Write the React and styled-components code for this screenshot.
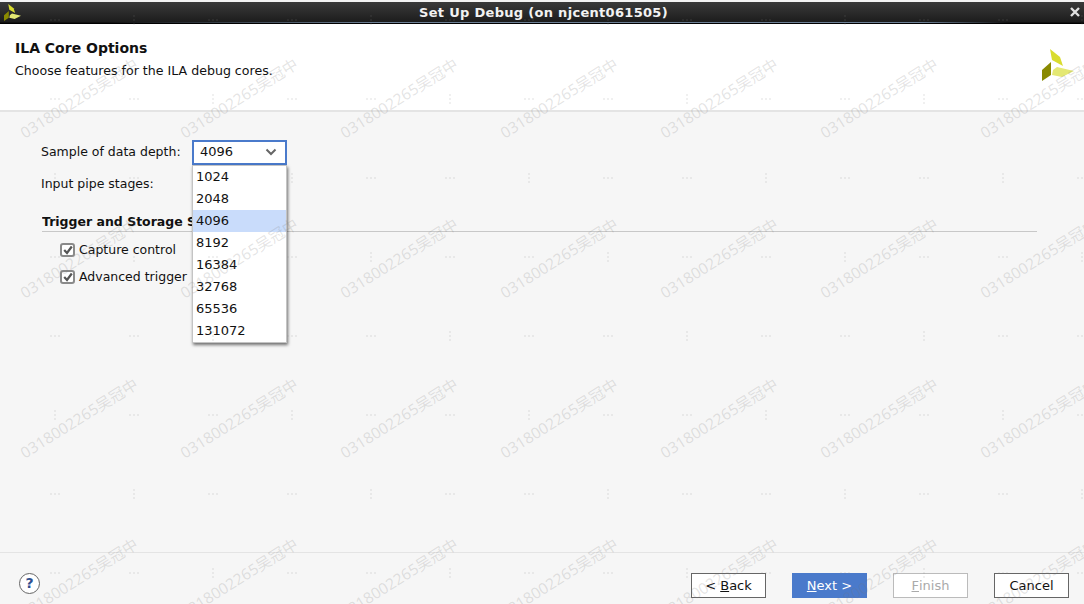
import React from "react";
import styled, { createGlobalStyle } from "styled-components";

const GlobalStyle = createGlobalStyle`
    html, body {
        margin: 0;
        padding: 0;
        background: #f6f6f6;
    }
    body {
        font-family: "DejaVu Sans", sans-serif;
        font-size: 13px;
        color: #111;
    }
`;

const Page = styled.div`
    position: relative;
    width: 1084px;
    height: 604px;
    overflow: hidden;
    display: flex;
    flex-direction: column;
    background: #f6f6f6;
`;

const TitleBar = styled.div`
    height: 24px;
    flex: none;
    display: flex;
    align-items: center;
    justify-content: space-between;
    padding: 0 4px;
    box-sizing: border-box;
    border-top: 2px solid #f4f4f4;
    border-bottom: 2px solid #000;
    background: linear-gradient(#3a3a3a, #1c1c1c);
`;

const TitleGlow = styled.div`
    height: 1px;
    flex: none;
    margin-top: -2px;
    background: linear-gradient(to right, #111 10%, #6c7f95 35%, #6c7f95 85%, #111 93%);
    position: relative;
`;

const TitleText = styled.div`
    flex: 1;
    text-align: center;
    color: #f2f2f2;
    font-weight: bold;
    font-size: 13px;
    letter-spacing: 0.3px;
    padding-right: 4px;
`;

const Header = styled.div`
    height: 88px;
    flex: none;
    margin-top: 1px;
    background: #fff;
    border-bottom: 2px solid #e4e4e4;
    box-sizing: border-box;
    display: flex;
    justify-content: space-between;
    padding: 15px 10px 0 15px;
`;

const HeaderTitle = styled.div`
    font-weight: bold;
    font-size: 14px;
    line-height: 18px;
`;

const HeaderSub = styled.div`
    font-size: 12.6px;
    line-height: 16px;
    margin-top: 6px;
`;

const HeaderLogo = styled.div`
    padding-top: 10px;
`;

const Body = styled.div`
    flex: 1;
    padding: 28px 47px 0 41px;
`;

const FieldRow = styled.div`
    display: flex;
    align-items: center;
    height: 25px;
    margin-bottom: 7px;
    font-size: 12.5px;
`;

const FieldLabel = styled.div`
    width: 151px;
    flex: none;
    padding-bottom: 2px;
`;

const SelectWrap = styled.div`
    position: relative;
    width: 95px;
    height: 25px;
`;

const SelectBox = styled.div`
    box-sizing: border-box;
    height: 25px;
    border: 2px solid #4a7acb;
    background: #fff;
    display: flex;
    align-items: center;
    justify-content: space-between;
    padding: 0 8px 2px 6px;
    font-size: 13px;
`;

const Dropdown = styled.div`
    position: absolute;
    top: 25px;
    left: 0;
    width: 95px;
    box-sizing: border-box;
    background: #fff;
    border: 1px solid #c4c4c4;
    box-shadow: 1px 2px 3px rgba(0, 0, 0, 0.55);
    z-index: 2;
`;

const Option = styled.div`
    height: 22px;
    line-height: 22px;
    padding-left: 3px;
    font-size: 13px;
    background: ${(p) => (p.$selected ? "#c9dcfb" : "transparent")};
`;

const SectionTitle = styled.div`
    margin: 17px 0 0 1px;
    font-weight: bold;
    font-size: 12.5px;
    line-height: 16px;
    height: 17px;
    white-space: nowrap;
    overflow: hidden;
    border-bottom: 1px solid #c8c8c8;
`;

const CheckRow = styled.div`
    display: flex;
    align-items: center;
    gap: 4px;
    height: 27px;
    margin-left: 19px;
    font-size: 12.5px;
`;

const CheckFirst = styled(CheckRow)`
    margin-top: 4px;
`;

const CheckBox = styled.div`
    width: 15px;
    height: 14px;
    box-sizing: border-box;
    border: 2px solid #8a8a8a;
    border-radius: 3px;
    background: #fff;
    display: flex;
    align-items: center;
    justify-content: center;
`;

const Footer = styled.div`
    height: 52px;
    flex: none;
    box-sizing: border-box;
    border-top: 1px solid #e4e4e4;
    display: flex;
    align-items: flex-start;
    padding: 20px 15px 0 19px;
`;

const HelpButton = styled.div`
    width: 21px;
    height: 21px;
    box-sizing: border-box;
    border: 1px solid #666;
    border-radius: 50%;
    background: #fff;
    color: #2f4f8f;
    font-weight: bold;
    font-size: 14px;
    line-height: 19px;
    text-align: center;
`;

const ButtonRow = styled.div`
    margin-left: auto;
    display: flex;
    gap: 26px;
`;

const Button = styled.div`
    width: 75px;
    height: 25px;
    box-sizing: border-box;
    display: flex;
    align-items: center;
    justify-content: center;
    font-size: 13px;
    white-space: pre;
    background: ${(p) => (p.$primary ? "#4a7acb" : "#fff")};
    color: ${(p) => (p.$primary ? "#fff" : p.$disabled ? "#aaa" : "#111")};
    border: 1px solid ${(p) => (p.$primary ? "#4a7acb" : p.$disabled ? "#bbb" : "#666")};
`;

const Mnemonic = styled.span`
    text-decoration: underline;
`;

const WatermarkLayer = styled.div`
    position: absolute;
    top: 0;
    left: -20px;
    pointer-events: none;
    z-index: 3;
    display: grid;
    grid-template-columns: repeat(7, 160px);
    grid-auto-rows: 160px;
`;

const WatermarkCell = styled.div`
    position: relative;
`;

const WatermarkText = styled.span`
    position: absolute;
    left: 99px;
    top: 98px;
    font-family: "Noto Sans", "Noto Sans CJK SC", sans-serif;
    font-size: 15.5px;
    line-height: 20px;
    white-space: nowrap;
    color: rgba(120, 120, 120, 0.2);
    transform: translate(-50%, -50%) rotate(-32deg);
`;

const SpeckLayer = styled.div`
    position: absolute;
    top: -20px;
    left: 15px;
    pointer-events: none;
    z-index: 3;
    display: grid;
    grid-template-columns: repeat(14, 79px);
    grid-auto-rows: 79px;
`;

const SpeckCell = styled.div`
    display: flex;
    align-items: center;
    justify-content: center;
`;

// three faint dots, either stacked or side by side
const Speck = styled.i`
    width: 2px;
    height: 2px;
    background: rgba(128, 128, 128, 0.12);
    box-shadow: ${(p) => (p.$vertical
        ? "0 -4px 0 rgba(128, 128, 128, 0.12), 0 4px 0 rgba(128, 128, 128, 0.12)"
        : "-4px 0 0 rgba(128, 128, 128, 0.12), 4px 0 0 rgba(128, 128, 128, 0.12)")};
`;

const OPTIONS = ["1024", "2048", "4096", "8192", "16384", "32768", "65536", "131072"];

function Logo({ size }) {
    return (
        <svg width={size} height={size} viewBox="0 0 32 32">
            <polygon points="8,0 18,8 21,17 10,11" fill="#d9dc2e" />
            <polygon points="0,21 9,13 9,26 0,32" fill="#8a8a00" />
            <polygon points="11,21 15,18 32,22 20,28 10,26" fill="#e4e873" />
        </svg>
    );
}

function Check() {
    return (
        <svg width="10" height="10" viewBox="0 0 10 10">
            <path d="M1.2 5 L4 8 L8.8 1.5" fill="none" stroke="#555" strokeWidth="2.2" />
        </svg>
    );
}

function App() {
    return (
        <Page>
            <GlobalStyle />
            <TitleBar>
                <Logo size={17} />
                <TitleText>Set Up Debug (on njcent061505)</TitleText>
                <svg width="10" height="10" viewBox="0 0 10 10">
                    <path d="M1 1 L9 9 M9 1 L1 9" stroke="#e0e0e0" strokeWidth="2.4" />
                </svg>
            </TitleBar>
            <TitleGlow />
            <Header>
                <div>
                    <HeaderTitle>ILA Core Options</HeaderTitle>
                    <HeaderSub>Choose features for the ILA debug cores.</HeaderSub>
                </div>
                <HeaderLogo>
                    <Logo size={32} />
                </HeaderLogo>
            </Header>
            <Body>
                <FieldRow>
                    <FieldLabel>Sample of data depth:</FieldLabel>
                    <SelectWrap>
                        <SelectBox>
                            4096
                            <svg width="12" height="8" viewBox="0 0 12 8">
                                <path d="M1.5 1.5 L6 6 L10.5 1.5" fill="none" stroke="#666" strokeWidth="2" />
                            </svg>
                        </SelectBox>
                        <Dropdown>
                            {OPTIONS.map((o) => (
                                <Option key={o} $selected={o === "4096"}>{o}</Option>
                            ))}
                        </Dropdown>
                    </SelectWrap>
                </FieldRow>
                <FieldRow>
                    <FieldLabel>Input pipe stages:</FieldLabel>
                </FieldRow>
                <SectionTitle>Trigger and Storage Settings</SectionTitle>
                <CheckFirst>
                    <CheckBox><Check /></CheckBox>
                    Capture control
                </CheckFirst>
                <CheckRow>
                    <CheckBox><Check /></CheckBox>
                    Advanced trigger
                </CheckRow>
            </Body>
            <Footer>
                <HelpButton>?</HelpButton>
                <ButtonRow>
                    <Button>{"< "}<Mnemonic>B</Mnemonic>ack</Button>
                    <Button $primary><Mnemonic>N</Mnemonic>{"ext >"}</Button>
                    <Button $disabled><Mnemonic>F</Mnemonic>inish</Button>
                    <Button>Cancel</Button>
                </ButtonRow>
            </Footer>
            <SpeckLayer>
                {Array.from({ length: 14 * 8 }).map((_, i) => (
                    <SpeckCell key={i}>
                        <Speck $vertical={i % 3 === 1} />
                    </SpeckCell>
                ))}
            </SpeckLayer>
            <WatermarkLayer>
                {Array.from({ length: 28 }).map((_, i) => (
                    <WatermarkCell key={i}>
                        <WatermarkText>0318002265吴冠中</WatermarkText>
                    </WatermarkCell>
                ))}
            </WatermarkLayer>
        </Page>
    );
}

export default App;
